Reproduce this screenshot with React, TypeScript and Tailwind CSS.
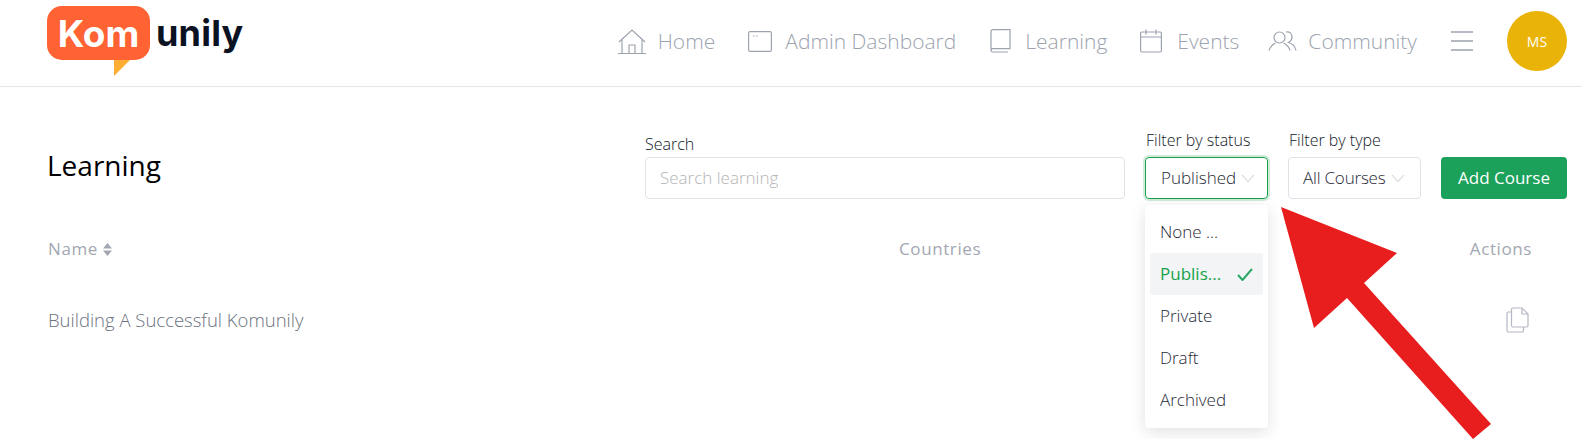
import React from "react";

const stroke = "#9ca3af";

function NavItem({ icon, label, gap, iconW }: { icon: React.ReactNode; label: string; gap: string; iconW: string }) {
  return (
    <div className={`flex items-center ${gap}`}>
      <div className={`${iconW} flex justify-center`}>{icon}</div>
      <span className="text-[21px] font-light leading-7 text-[#9ca3af] whitespace-nowrap">{label}</span>
    </div>
  );
}

const Home = (
  <svg width="28" height="25" viewBox="0 0 28 25" fill="none" stroke={stroke} strokeWidth="1.2">
    <path d="M1 13 14 1l13 12" />
    <path d="M4 10.5V24M24 10.5V24M0 24.5h28" />
    <path d="M11 24v-8h6v8" />
  </svg>
);
const Dash = (
  <svg width="24" height="21" viewBox="0 0 24 21" fill="none" stroke={stroke} strokeWidth="1.2">
    <rect x="0.6" y="0.6" width="22.8" height="19.8" rx="1.5" />
    <path d="M5 5h1.4M8.2 5h1.4" />
  </svg>
);
const Book = (
  <svg width="21" height="24" viewBox="0 0 21 24" fill="none" stroke={stroke} strokeWidth="1.2">
    <path d="M1 21V2.5A1.8 1.8 0 0 1 2.8.7H20v19H2.5A1.6 1.6 0 0 0 1 21.5 1.6 1.6 0 0 0 2.5 23H18" />
  </svg>
);
const Calendar = (
  <svg width="22" height="24" viewBox="0 0 22 24" fill="none" stroke={stroke} strokeWidth="1.2">
    <rect x="0.6" y="3" width="20.8" height="20" rx="1.2" />
    <path d="M1 8h20M6 0.5v5M16 0.5v5" />
  </svg>
);
const People = (
  <svg width="29" height="20" viewBox="0 0 29 20" fill="none" stroke={stroke} strokeWidth="1.2">
    <circle cx="11.500" cy="6.500" r="5.500" />
    <path d="M1 19.500c1-4.500 4-6 6.500-7.500M22 19.500c-1-4.500-4-6-6.500-7.500" />
    <path d="M18 1c3.500-.8 6 1.500 6 5s-2 4.500-3.500 5.500c3 .8 6.500 3 7.500 8" />
  </svg>
);
const Chevron = () => (
  <svg width="14" height="9" viewBox="0 0 14 9" fill="none" stroke="#d1d5db" strokeWidth="1.1" className="shrink-0">
    <path d="M1 1l6 6.500L13 1" />
  </svg>
);

const items = ["None ...", "Publis...", "Private", "Draft", "Archived"];

export default function App() {
  return (
    <div className="relative h-[439px] w-[1582px] overflow-hidden bg-white font-['Open_Sans','Noto_Sans',sans-serif]">
      <header className="flex h-[87px] items-center justify-between border-b border-[#e5e7eb] pb-[4px] pl-[47px] pr-[15px]">
        <div className="mb-[16px] flex items-center">
          <div className="relative flex h-[54px] w-[103px] items-center justify-center rounded-[15px] bg-[#ff6233]">
            <span className="font-['Inter',sans-serif] text-[37px] font-bold leading-none tracking-[0px] text-white">Kom</span>
            <svg width="16" height="16" viewBox="0 0 16 16" className="absolute left-[67px] top-[54px]">
              <path d="M0 0h16L0 16z" fill="#ffad33" />
            </svg>
          </div>
          <span className="ml-[6px] font-['Inter',sans-serif] text-[36px] font-bold leading-none tracking-[0.2px] text-[#0b1221]">unily</span>
        </div>
        <nav className="flex items-center">
          <NavItem icon={Home} label="Home" gap="gap-[11px]" iconW="w-[30px]" />
          <div className="ml-[33px]"><NavItem icon={Dash} label="Admin Dashboard" gap="gap-[13px]" iconW="w-[24px]" /></div>
          <div className="ml-[34px]"><NavItem icon={Book} label="Learning" gap="gap-[14px]" iconW="w-[21px]" /></div>
          <div className="ml-[33px]"><NavItem icon={Calendar} label="Events" gap="gap-[15px]" iconW="w-[22px]" /></div>
          <div className="ml-[29px]"><NavItem icon={People} label="Community" gap="gap-[11px]" iconW="w-[29px]" /></div>
          <div className="ml-[34px] flex w-[22px] flex-col gap-[7px]">
            <div className="h-[2px] bg-[#b5b9c2]" />
            <div className="h-[2px] bg-[#b5b9c2]" />
            <div className="h-[2px] bg-[#b5b9c2]" />
          </div>
          <div className="ml-[34px] flex h-[60px] w-[60px] items-center justify-center rounded-full bg-[#eab308] text-[14px] text-white">MS</div>
        </nav>
      </header>

      <main className="px-[47px] pr-[15px]">
        <div className="flex h-[112px] items-center">
          <h1 className="mt-[43px] text-[28px] font-normal leading-8 text-black">Learning</h1>
          <div className="ml-auto mt-[43px] flex items-end">
            <div className="w-[480px]">
              <div className="mb-[3px] text-[16px] font-light leading-5 text-[#111827]">Search</div>
              <div className="flex h-[42px] items-center rounded-[4px] border border-[#e0e2e8] px-[14px] text-[17px] font-light text-[#b4b4b4]">Search learning</div>
            </div>
            <div className="ml-[20px] w-[123px]">
              <div className="mb-[7px] pl-px text-[16px] font-light leading-5 text-[#111827]">Filter by status</div>
              <div className="flex h-[42px] items-center gap-[5px] rounded-[4px] border border-[#16a34a] px-[15px] text-[17px] font-light whitespace-nowrap text-[#1f2937] shadow-[0_0_0_2px_#d1ead9]">
                Published<Chevron />
              </div>
            </div>
            <div className="ml-[20px] w-[133px]">
              <div className="mb-[7px] pl-px text-[16px] font-light leading-5 text-[#111827]">Filter by type</div>
              <div className="flex h-[42px] items-center gap-[6px] rounded-[4px] border border-[#e0e2e8] pl-[14px] text-[17px] font-light tracking-[-0.2px] whitespace-nowrap text-[#1f2937]">
                All Courses<Chevron />
              </div>
            </div>
            <button className="ml-[20px] h-[42px] w-[126px] rounded-[4px] bg-[#1ba15a] text-[17px] font-normal text-white">Add Course</button>
          </div>
        </div>

        <div className="mt-[38px] grid grid-cols-[851px_1fr_auto] pl-px pr-[35px] text-[17px] leading-6 tracking-[0.6px] text-[#a3a7b2]">
          <div className="flex items-center gap-[5px]">
            Name
            <svg width="9" height="13" viewBox="0 0 9 13" fill="#a3a7b2"><path d="M4.500 0 9 5.500H0zM4.500 13 0 7.500h9z" /></svg>
          </div>
          <div>Countries</div>
          <div>Actions</div>
        </div>
        <div className="mt-[45px] flex items-center justify-between pl-px pr-[38px]">
          <span className="text-[18.5px] font-light leading-7 text-[#6b7280]">Building A Successful Komunily</span>
          <svg width="23" height="26" viewBox="0 0 23 26" fill="none" stroke="#b4b8c2" strokeWidth="1.2">
            <path d="M7 1h9l6 6v11.500a1.500 1.500 0 0 1-1.500 1.500H7a1.500 1.500 0 0 1-1.500-1.500v-16A1.500 1.500 0 0 1 7 1z" />
            <path d="M16 1v6h6" />
            <path d="M5.500 5H2.500A1.500 1.500 0 0 0 1 6.500v17A1.500 1.500 0 0 0 2.500 25H16a1.500 1.500 0 0 0 1.500-1.500V20" />
          </svg>
        </div>
      </main>

      <div className="absolute left-[1145px] top-[205px] h-[223px] w-[123px] rounded-[4px] bg-white p-[5px] shadow-[0_4px_16px_rgba(0,0,0,0.12)]">
        <div className="flex flex-col pt-px">
          {items.map((t, i) => (
            <div key={t} className={`flex h-[42px] items-center justify-between rounded-[3px] px-[10px] text-[17px] ${i === 1 ? "bg-[#f3f4f6] font-normal text-[#16a34a]" : "font-light text-[#1f2937]"}`}>
              {t}
              {i === 1 && (
                <svg width="16" height="13" viewBox="0 0 16 13" fill="none" stroke="#2aa866" strokeWidth="2"><path d="M1 7l4.500 5L15 1" /></svg>
              )}
            </div>
          ))}
        </div>
      </div>

      <svg width="1582" height="439" className="pointer-events-none absolute left-0 top-0">
        <polygon points="1281,207 1397,253 1364,283 1491,424 1473,439 1347,298 1314,328" fill="#e81e1e" />
      </svg>
    </div>
  );
}
